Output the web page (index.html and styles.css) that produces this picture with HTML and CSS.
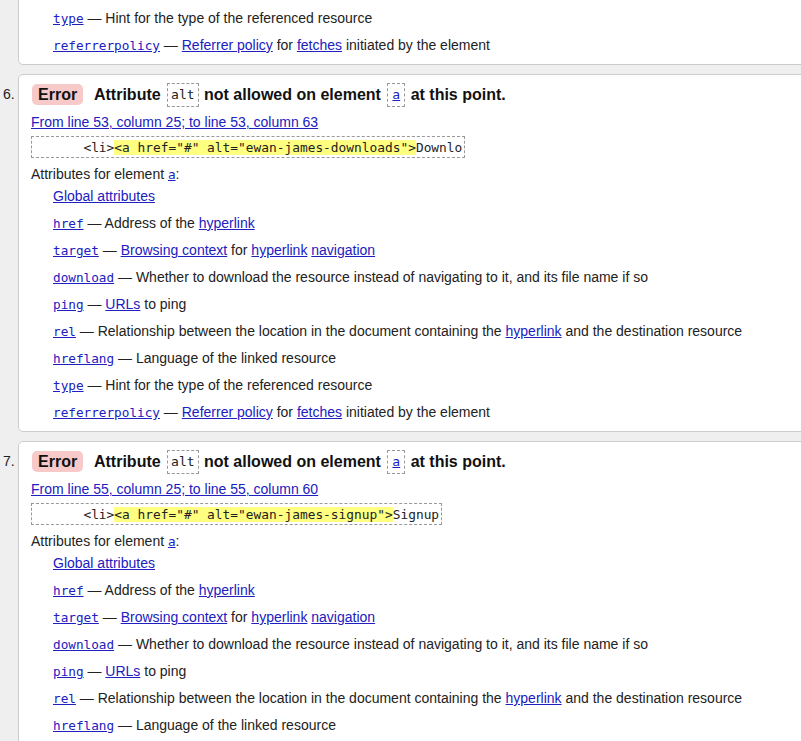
FILE: index.html
```html
<!DOCTYPE html>
<html lang="en">
<head>
<meta charset="utf-8">
<title>Validation messages</title>
<link rel="stylesheet" href="styles.css">
</head>
<body>
<div class="msgs">
  <div class="item">
    <div class="num"></div>
    <div class="card cut">
      <ul class="attrs">
        <li><a href="#"><code>type</code></a> — Hint for the type of the referenced resource</li>
        <li><a href="#"><code>referrerpolicy</code></a> — <a href="#">Referrer policy</a> for <a href="#">fetches</a> initiated by the element</li>
      </ul>
    </div>
  </div>

  <div class="item">
    <div class="num">6.</div>
    <div class="card">
      <p class="head"><span class="badge">Error</span> Attribute <code class="box">alt</code> not allowed on element <code class="box"><a href="#">a</a></code> at this point.</p>
      <p class="loc"><a href="#">From line 53, column 25; to line 53, column 63</a></p>
      <div class="extract"><code>      &lt;li&gt;<b>&lt;a href="#" alt="ewan-james-downloads"&gt;</b>Downlo</code></div>
      <p class="for">Attributes for element <a href="#"><code>a</code></a>:</p>
      <ul class="attrs">
        <li><a href="#">Global attributes</a></li>
        <li><a href="#"><code>href</code></a> — Address of the <a href="#">hyperlink</a></li>
        <li><a href="#"><code>target</code></a> — <a href="#">Browsing context</a> for <a href="#">hyperlink</a> <a href="#">navigation</a></li>
        <li><a href="#"><code>download</code></a> — Whether to download the resource instead of navigating to it, and its file name if so</li>
        <li><a href="#"><code>ping</code></a> — <a href="#">URLs</a> to ping</li>
        <li><a href="#"><code>rel</code></a> — Relationship between the location in the document containing the <a href="#">hyperlink</a> and the destination resource</li>
        <li><a href="#"><code>hreflang</code></a> — Language of the linked resource</li>
        <li><a href="#"><code>type</code></a> — Hint for the type of the referenced resource</li>
        <li><a href="#"><code>referrerpolicy</code></a> — <a href="#">Referrer policy</a> for <a href="#">fetches</a> initiated by the element</li>
      </ul>
    </div>
  </div>

  <div class="item">
    <div class="num">7.</div>
    <div class="card">
      <p class="head"><span class="badge">Error</span> Attribute <code class="box">alt</code> not allowed on element <code class="box"><a href="#">a</a></code> at this point.</p>
      <p class="loc"><a href="#">From line 55, column 25; to line 55, column 60</a></p>
      <div class="extract"><code>      &lt;li&gt;<b>&lt;a href="#" alt="ewan-james-signup"&gt;</b>Signup</code></div>
      <p class="for">Attributes for element <a href="#"><code>a</code></a>:</p>
      <ul class="attrs">
        <li><a href="#">Global attributes</a></li>
        <li><a href="#"><code>href</code></a> — Address of the <a href="#">hyperlink</a></li>
        <li><a href="#"><code>target</code></a> — <a href="#">Browsing context</a> for <a href="#">hyperlink</a> <a href="#">navigation</a></li>
        <li><a href="#"><code>download</code></a> — Whether to download the resource instead of navigating to it, and its file name if so</li>
        <li><a href="#"><code>ping</code></a> — <a href="#">URLs</a> to ping</li>
        <li><a href="#"><code>rel</code></a> — Relationship between the location in the document containing the <a href="#">hyperlink</a> and the destination resource</li>
        <li><a href="#"><code>hreflang</code></a> — Language of the linked resource</li>
        <li><a href="#"><code>type</code></a> — Hint for the type of the referenced resource</li>
        <li><a href="#"><code>referrerpolicy</code></a> — <a href="#">Referrer policy</a> for <a href="#">fetches</a> initiated by the element</li>
      </ul>
    </div>
  </div>
</div>
</body>
</html>
```

FILE: styles.css
```css
html {
  overflow: hidden;
  background: #efefef;
}
body {
  margin: 0;
  font-family: "Liberation Sans", Arial, sans-serif;
  font-size: 14px;
  color: #222;
}
a {
  color: #2020c0;
  text-decoration: underline;
}
code {
  font-family: "DejaVu Sans Mono", Consolas, monospace;
  font-size: 12.7px;
  line-height: 1;
}
.msgs {
  display: flex;
  flex-direction: column;
  gap: 9px;
}
.item {
  display: flex;
  align-items: flex-start;
}
.num {
  width: 18px;
  flex: none;
  box-sizing: border-box;
  padding: 8px 0 0 3px;
  line-height: 24px;
  font-size: 14px;
}
.card {
  width: 830px;
  flex: none;
  box-sizing: border-box;
  background: #fff;
  border: 1px solid #ccc;
  border-radius: 5px;
  padding: 8px 12px 10px 12px;
}
.card.cut {
  margin-top: -20px;
  padding-top: 28px;
}
.head {
  margin: 0;
  height: 24px;
  line-height: 24px;
  font-size: 16px;
  font-weight: bold;
  color: #111;
  white-space: nowrap;
}
.badge {
  display: inline-block;
  margin-left: 1px;
  margin-right: 7px;
  padding: 0 6px;
  line-height: 21px;
  background: #f7c9c9;
  border-radius: 5px;
}
.box {
  display: inline-block;
  box-sizing: border-box;
  height: 24px;
  font-weight: normal;
  font-size: 13px;
  line-height: 22px;
  padding: 0 3px;
  margin: 0 1px 0 2px;
  border: 1px dashed #999;
  vertical-align: top;
  color: #222;
}
.box a {
  padding: 0 1px;
}
.loc {
  margin: 6px 0 0 0;
  height: 18px;
  line-height: 18px;
}
.extract {
  display: inline-block;
  height: 20px;
  margin-top: 5px;
  border: 1px dashed #999;
  padding: 0 2px 0 5px;
  line-height: 20px;
  white-space: pre;
  vertical-align: top;
}
.extract code {
  font-size: 12.85px;
  line-height: 20px;
  color: #222;
}
.extract b {
  font-weight: normal;
  background: #ffff80;
}
.for {
  margin: 7px 0 0 0;
  height: 18px;
  line-height: 18px;
}
.attrs {
  list-style: none;
  margin: 4px 0 0 0;
  padding: 0 0 0 22px;
  display: flex;
  flex-direction: column;
  gap: 9px;
}
.cut .attrs {
  margin-top: 0;
}
.attrs li {
  height: 18px;
  line-height: 18px;
  white-space: nowrap;
}
```
